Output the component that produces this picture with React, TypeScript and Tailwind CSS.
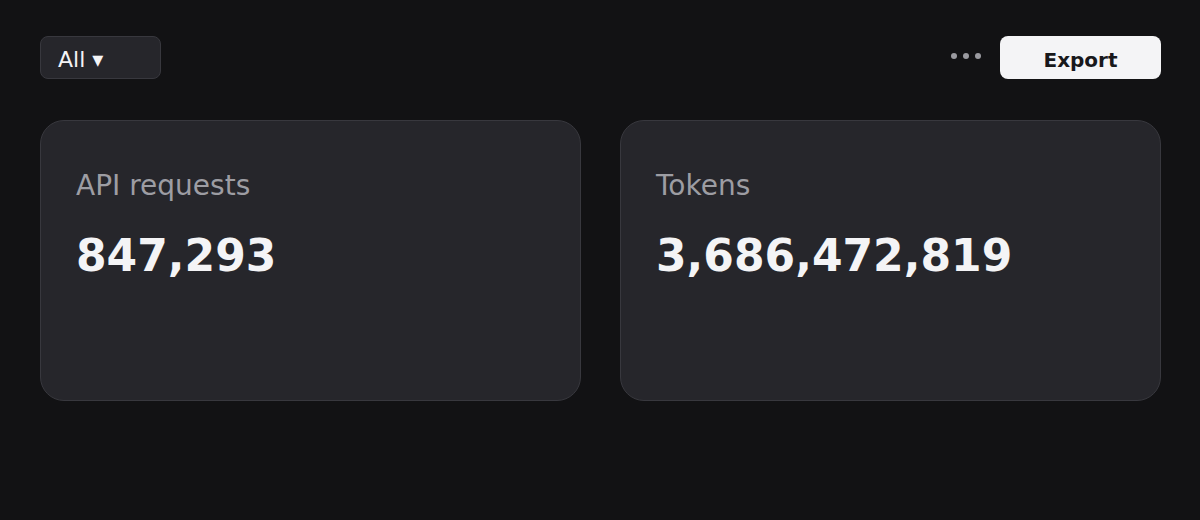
import React from "react";

const font = { fontFamily: '"DejaVu Sans", "Liberation Sans", sans-serif' };

function StatCard({ label, value }: { label: string; value: string }) {
  return (
    <div className="h-[281px] rounded-[24px] border border-[#38383e] bg-[#26262b] pl-[35px] pt-[48px]">
      <div className="text-[28px] leading-[34px] text-[#9d9da3]">{label}</div>
      <div className="mt-[27px] text-[44px] font-bold leading-[52px] text-[#f4f4f6]">{value}</div>
    </div>
  );
}

export default function App() {
  return (
    <div className="min-h-[520px] w-full bg-[#121214] pl-10 pr-[39px] pt-9" style={font}>
      <div className="flex items-center justify-between">
        <button className="flex h-[43px] w-[121px] items-center rounded-lg border border-[#38383e] bg-[#26262b] pl-[17px] pt-[3px] text-[22px] text-[#f4f4f6]">
          <span>All ▾</span>
        </button>
        <div className="flex items-center">
          <div className="mr-[19px] flex items-center gap-[6px] pb-[4px]">
            <span className="block h-[6px] w-[6px] rounded-full bg-[#9a9aa0]" />
            <span className="block h-[6px] w-[6px] rounded-full bg-[#9a9aa0]" />
            <span className="block h-[6px] w-[6px] rounded-full bg-[#9a9aa0]" />
          </div>
          <button className="flex h-[43px] w-[161px] items-center justify-center rounded-lg bg-[#f4f4f6] pt-[4px] text-[20px] font-bold text-[#18181b]">
            Export
          </button>
        </div>
      </div>
      <div className="mt-[41px] grid grid-cols-2 gap-[39px]">
        <StatCard label="API requests" value="847,293" />
        <StatCard label="Tokens" value="3,686,472,819" />
      </div>
    </div>
  );
}
